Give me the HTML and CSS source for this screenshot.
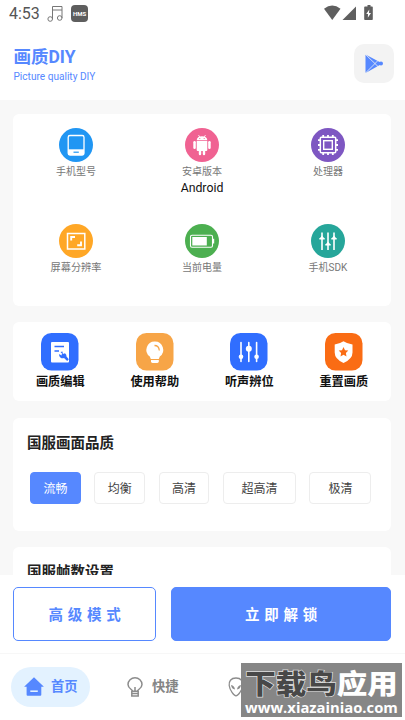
FILE: index.html
```html
<!DOCTYPE html>
<html lang="zh-CN">
<head>
<meta charset="utf-8">
<meta name="viewport" content="width=device-width, initial-scale=1">
<title>画质DIY</title>
<link rel="stylesheet" href="styles.css">
</head>
<body>
<div class="app">
  <div class="status">
    <span class="time">4:53</span>
    <svg class="note" width="17" height="18" viewBox="0 0 17 18" fill="none" stroke="#777" stroke-width="1"><path d="M5.5 14V1.5H15V13M5.5 5H15"/><circle cx="3.2" cy="14" r="2.3"/><circle cx="12.7" cy="13" r="2.3"/></svg>
    <span class="hms">HMS</span>
    <svg class="signals" width="50" height="16" viewBox="0 0 50 16" fill="#5f5f5f"><path d="M0 3.7Q8.200-2.500 16.500 3.700L8.250 15Z"/><path d="M32 1.500V15H18.500Z"/><path d="M42 1.500h1.500V0h3v1.500H48q.8 0 .8.800V14.200q0 .8-.8.800H41q-.8 0-.8-.8V2.300q0-.8.8-.8Z"/><path d="M45.300 4.500L42.200 9H44L43.800 12.700L47 8H45Z" fill="#fff"/></svg>
  </div>
  <header class="header">
    <div>
      <h1 class="title">画质DIY</h1>
      <p class="subtitle">Picture quality DIY</p>
    </div>
    <div class="play">
      <svg width="40" height="40" viewBox="0 0 40 40"><path d="M11.500 10.500L28.500 19.500L11.500 29Z" fill="#5688ff"/><path d="M11 10L24 22.500M11 29.500L24 16.500" stroke="#f3f3f3" stroke-width=".8"/><circle cx="27" cy="19.600" r="2" fill="#5688ff"/></svg>
    </div>
  </header>

  <main class="content">
    <section class="card info">
      <div class="cell">
        <svg width="34" height="34" viewBox="0 0 34 34"><circle cx="17" cy="17" r="17" fill="#2096f3"/><rect x="9.200" y="7.500" width="15.800" height="19.500" rx="1.800" fill="none" stroke="#fff" stroke-width="1.300"/><path d="M9 21.300H25V27H9Z" fill="#fff"/><path d="M14.500 24.200H19.800" stroke="#2096f3" stroke-width="1.200"/></svg>
        <span class="label">手机型号</span>
      </div>
      <div class="cell">
        <svg width="34" height="34" viewBox="0 0 34 34"><circle cx="17" cy="17" r="17" fill="#f06292"/><g fill="#fff"><path d="M11.700 12.200Q12 8.300 17 8.300T22.300 12.200Z"/><path d="M13.500 7l1.500 2.500M20.500 7L19 9.500" stroke="#fff" stroke-width=".8"/><path d="M11.700 13H22.300V22q0 1-1 1H20.200v3q0 1.200-1.200 1.200T17.800 26V23H16.200v3q0 1.200-1.200 1.200T13.800 26V23H12.700q-1 0-1-1Z"/><rect x="8.300" y="13" width="2.500" height="8" rx="1.200"/><rect x="23.200" y="13" width="2.500" height="8" rx="1.200"/></g><circle cx="14.800" cy="10.500" r=".6" fill="#f06292"/><circle cx="19.200" cy="10.500" r=".6" fill="#f06292"/></svg>
        <span class="label">安卓版本</span>
        <span class="value">Android</span>
      </div>
      <div class="cell">
        <svg width="34" height="34" viewBox="0 0 34 34" fill="none" stroke="#fff"><circle cx="17" cy="17" r="17" fill="#7e57c2" stroke="none"/><rect x="9.300" y="9.300" width="15.400" height="15.400" rx="1" stroke-width="1.500"/><rect x="12.700" y="12.700" width="8.600" height="8.600" stroke-width="1.400"/><path stroke-width="1.800" d="M12.200 7V9M17 7V9M21.800 7V9M12.200 25V27M17 25V27M21.800 25V27M7 12.200H9M7 17H9M7 21.800H9M25 12.200H27M25 17H27M25 21.800H27"/></svg>
        <span class="label">处理器</span>
      </div>
      <div class="cell">
        <svg width="34" height="34" viewBox="0 0 34 34" fill="none" stroke="#fff"><circle cx="17" cy="17" r="17" fill="#ffa726" stroke="none"/><rect x="8.500" y="9.500" width="17.300" height="15.500" stroke-width="1.500"/><path d="M12.200 16.500V13H16M22 17.500V21.200H18.200" stroke-width="1.900"/></svg>
        <span class="label wide-label">屏幕分辨率</span>
      </div>
      <div class="cell">
        <svg width="34" height="34" viewBox="0 0 34 34"><circle cx="17" cy="17" r="17" fill="#4caf50"/><rect x="5.500" y="11.200" width="22" height="12" rx="1.500" fill="none" stroke="#fff" stroke-width="1.100"/><path d="M7.300 13H21.800V21.500H7.300Z" fill="#fff"/><path d="M28 14.800h1.200v4.800H28Z" fill="#fff"/></svg>
        <span class="label">当前电量</span>
      </div>
      <div class="cell">
        <svg width="34" height="34" viewBox="0 0 34 34" fill="none" stroke="#fff" stroke-width="1.600"><circle cx="17" cy="17" r="17" fill="#26a69a" stroke="none"/><path d="M11 8.500V26M17 8.500V26M23 8.500V26M8.300 14.700H13.700M14.300 20.700H19.700M20.300 14.700H25.700"/><path d="M9 14L11 11.500L13 14ZM15 20L17 17.500L19 20ZM21 14L23 11.500L25 14Z" fill="#fff" stroke="none"/></svg>
        <span class="label">手机SDK</span>
      </div>
    </section>

    <section class="card tools">
      <div class="tool">
        <svg width="38" height="38" viewBox="0 0 38 38"><rect width="37.500" height="37.500" rx="10.500" fill="#306eff"/><path d="M10 10q0-1 1-1H27q1 0 1 1V28.500q0 1-1 1H11q-1 0-1-1Z" fill="#fff"/><path d="M13.500 13.500H23M13.500 18H18" stroke="#306eff" stroke-width="1.500"/><path d="M21.500 18.500L21.800 21L24 20.200A3.500 3.500 0 0 1 25.500 23.500L27.800 26.300L26.200 28L23 25A3.500 3.500 0 0 1 18.200 21L20.500 22.500L21 20.500L19.500 19Z" fill="#306eff"/></svg>
        <span>画质编辑</span>
      </div>
      <div class="tool">
        <svg width="38" height="38" viewBox="0 0 38 38"><rect width="37.500" height="37.500" rx="10.500" fill="#f7a547"/><path d="M18.800 8.500a8.300 8.300 0 0 1 5 15L22.800 26H14.800L13.800 23.500a8.300 8.300 0 0 1 5-15Z" fill="#fff"/><path d="M15 27H22.800V28.500Q22.500 30 21 30H16.800Q15.300 30 15 28.500Z" fill="#fff"/><path d="M18.500 12.500Q23 12.500 23.300 17.500" fill="none" stroke="#f7a547" stroke-width="1.300"/></svg>
        <span>使用帮助</span>
      </div>
      <div class="tool">
        <svg width="38" height="38" viewBox="0 0 38 38"><rect width="37.500" height="37.500" rx="10.500" fill="#306eff"/><path d="M11 9.500V28.500M18.800 9.500V28.500M26.600 9.500V28.500" stroke="#fff" stroke-width="1.600" stroke-linecap="round"/><g fill="#fff"><circle cx="11" cy="23.800" r="2.300"/><circle cx="18.800" cy="15.700" r="3"/><circle cx="26.600" cy="23.800" r="2.300"/></g></svg>
        <span>听声辨位</span>
      </div>
      <div class="tool">
        <svg width="38" height="38" viewBox="0 0 38 38"><rect width="37.500" height="37.500" rx="10.500" fill="#fa6c14"/><path d="M18.500 8.300Q22.500 11 27.500 11.500V19.500Q27.500 26 18.500 30Q9.700 26 9.700 19.500V11.500Q14.500 11 18.500 8.300Z" fill="#fff"/><path d="M18.500 14L20 17.200L23.300 17.600L20.900 20L21.500 23.500L18.500 21.800L15.500 23.500L16.100 20L13.700 17.600L17 17.200Z" fill="#fa6c14"/></svg>
        <span>重置画质</span>
      </div>
    </section>

    <section class="card quality">
      <h2>国服画面品质</h2>
      <div class="options">
        <span class="option selected">流畅</span>
        <span class="option">均衡</span>
        <span class="option">高清</span>
        <span class="option wide">超高清</span>
        <span class="option last">极清</span>
      </div>
    </section>

    <section class="card frames">
      <h2>国服帧数设置</h2>
    </section>
  </main>

  <div class="actions">
    <button class="advanced">高级模式</button>
    <button class="unlock">立即解锁</button>
  </div>

  <nav class="nav">
    <div class="tab active">
      <svg width="20" height="20" viewBox="0 0 20 20"><path d="M10 .3L19.900 9.800H17.300V17.800Q17.300 18.800 16.300 18.800H3.600Q2.600 18.800 2.600 17.800V9.800H.1Z" fill="#5688ff"/><path d="M6.300 14.200H13.800" stroke="#e3f2ff" stroke-width="1.600"/></svg>
      <span>首页</span>
    </div>
    <div class="tab">
      <svg width="20" height="20" viewBox="0 0 20 20" fill="none" stroke="#8c8c8c" stroke-width="1.500"><path d="M7.500 14.200C7.500 12.500 3 11.500 3 7.500A7 6.700 0 0 1 17 7.500C17 11.500 12.500 12.500 12.500 14.200"/><path d="M6.800 14.200H13.200V19H6.800ZM7 16.500H13M10 10V14"/></svg>
      <span>快捷</span>
    </div>
    <div class="tab">
      <svg width="20" height="20" viewBox="0 0 20 20"><path d="M10 1C4.800 1 2.700 4.500 3.200 8.500C3.700 13 8 18.800 10 18.800S16.300 13 16.800 8.500C17.300 4.500 15.200 1 10 1Z" fill="none" stroke="#8c8c8c" stroke-width="1.300"/><path d="M5 8Q8.500 8.500 9 12.500Q5.500 12 5 8ZM15 8Q11.500 8.500 11 12.500Q14.500 12 15 8Z" fill="#8c8c8c"/></svg>
    </div>
  </nav>
  <div class="watermark">
    <div class="brand"><span class="dark">下载鸟</span><span class="light">应用</span></div>
    <div class="site">www.xiazainiao.com</div>
  </div>
</div>
</body>
</html>
```

FILE: styles.css
```css
* { box-sizing: border-box; }
body { margin: 0; font-family: Roboto, "Noto Sans CJK SC", sans-serif; }
h1, h2, p { margin: 0; }
svg { display: block; flex: none; }
.app {
  position: relative;
  width: 405px;
  height: 720px;
  display: flex;
  flex-direction: column;
  overflow: hidden;
  background: #fff;
}
.status {
  flex: none;
  height: 28px;
  display: flex;
  align-items: center;
  padding: 0 31px 0 9px;
}
.time { width: 38px; font-size: 16px; line-height: 28px; color: #555; }
.note { margin-top: -1px; }
.hms {
  width: 17px;
  height: 17px;
  margin-left: 7px;
  margin-top: -1px;
  border-radius: 4px;
  background: #5e5e5e;
  color: #fff;
  font-size: 6px;
  font-weight: 700;
  line-height: 17px;
  text-align: center;
}
.signals { margin-left: auto; margin-top: -3px; }
.header {
  flex: none;
  height: 72px;
  display: flex;
  justify-content: space-between;
  padding: 16px 11px 0 13.500px;
}
.title { height: 26px; font-size: 17.500px; line-height: 27px; font-weight: 700; color: #5688ff; }
.subtitle { font-size: 10.100px; line-height: 14px; color: #5688ff; }
.play { width: 40px; height: 39px; border-radius: 10px; background: #f3f3f3; }
.content {
  flex: none;
  height: 475px;
  overflow: hidden;
  display: flex;
  flex-direction: column;
  gap: 16.500px;
  padding: 13.500px 14px 0 13px;
  background: #f8f8f8;
}
.card { flex: none; border-radius: 6px; background: #fff; }
.info {
  height: 192px;
  display: grid;
  grid-template-columns: repeat(3, 1fr);
  grid-template-rows: 96px 96px;
  padding-top: 14.500px;
}
.cell { display: flex; flex-direction: column; align-items: center; }
.label { font-size: 10px; line-height: 16px; margin-top: 2px; color: #777; }
.wide-label { font-size: 10.200px; }
.value { font-size: 12.300px; line-height: 16px; color: #111; }
.tools { height: 79px; display: grid; grid-template-columns: repeat(4, 1fr); padding-top: 11px; }
.tool { display: flex; flex-direction: column; align-items: center; }
.tool span { font-size: 12.200px; line-height: 19px; font-weight: 700; margin-top: 2px; color: #111; }
.quality { height: 113px; }
.card h2 { padding: 14px 0 0 14px; font-size: 14.500px; line-height: 23px; font-weight: 700; color: #222; }
.options { display: flex; gap: 13.500px; padding: 17px 0 0 17px; }
.option {
  width: 50.800px;
  height: 32px;
  border: 1px solid #ededed;
  border-radius: 4px;
  font-size: 12px;
  line-height: 32px;
  text-align: center;
  color: #444;
}
.option.selected { background: #5688ff; border-color: #5688ff; color: #fff; }
.option.wide { width: 73px; }
.option.last { width: 62px; }
.frames { height: 113px; }
.actions { flex: none; height: 78px; display: flex; gap: 15px; padding: 12px 14px 0 13px; }
.actions button {
  height: 54px;
  padding: 0 0 0 5px;
  border: 1.500px solid #5688ff;
  border-radius: 5px;
  font: 700 14.500px/50px "Noto Sans CJK SC", sans-serif;
  letter-spacing: 4.700px;
}
.advanced { width: 143px; background: #fff; color: #5688ff; }
.unlock { flex: 1; background: #5688ff; color: #fff; }
.nav {
  flex: none;
  height: 67px;
  display: flex;
  gap: 22px;
  border-top: 1px solid #f7f7f7;
  padding: 13px 0 0 11px;
}
.tab {
  width: 79px;
  height: 40px;
  border-radius: 20px;
  display: flex;
  align-items: center;
  gap: 7px;
  padding-left: 13px;
  font-size: 13.300px;
  font-weight: 700;
  line-height: 20px;
  color: #858585;
}
.tab.active { background: #e3f2ff; color: #5688ff; }
.watermark {
  position: absolute;
  left: 241px;
  top: 663px;
  width: 161px;
  height: 54px;
  background: #868686;
  text-align: center;
  white-space: nowrap;
}
.brand {
  height: 34px;
  font: 900 27px/40px "Noto Sans CJK SC", sans-serif;
  transform: scaleX(1.130);
  -webkit-text-stroke: 1.400px #ddd;
  paint-order: stroke fill;
}
.dark { color: #484848; }
.light { color: #fff; -webkit-text-stroke-width: 0; }
.site { font: 700 14.800px/20px "Open Sans", sans-serif; color: #fff; }
```
